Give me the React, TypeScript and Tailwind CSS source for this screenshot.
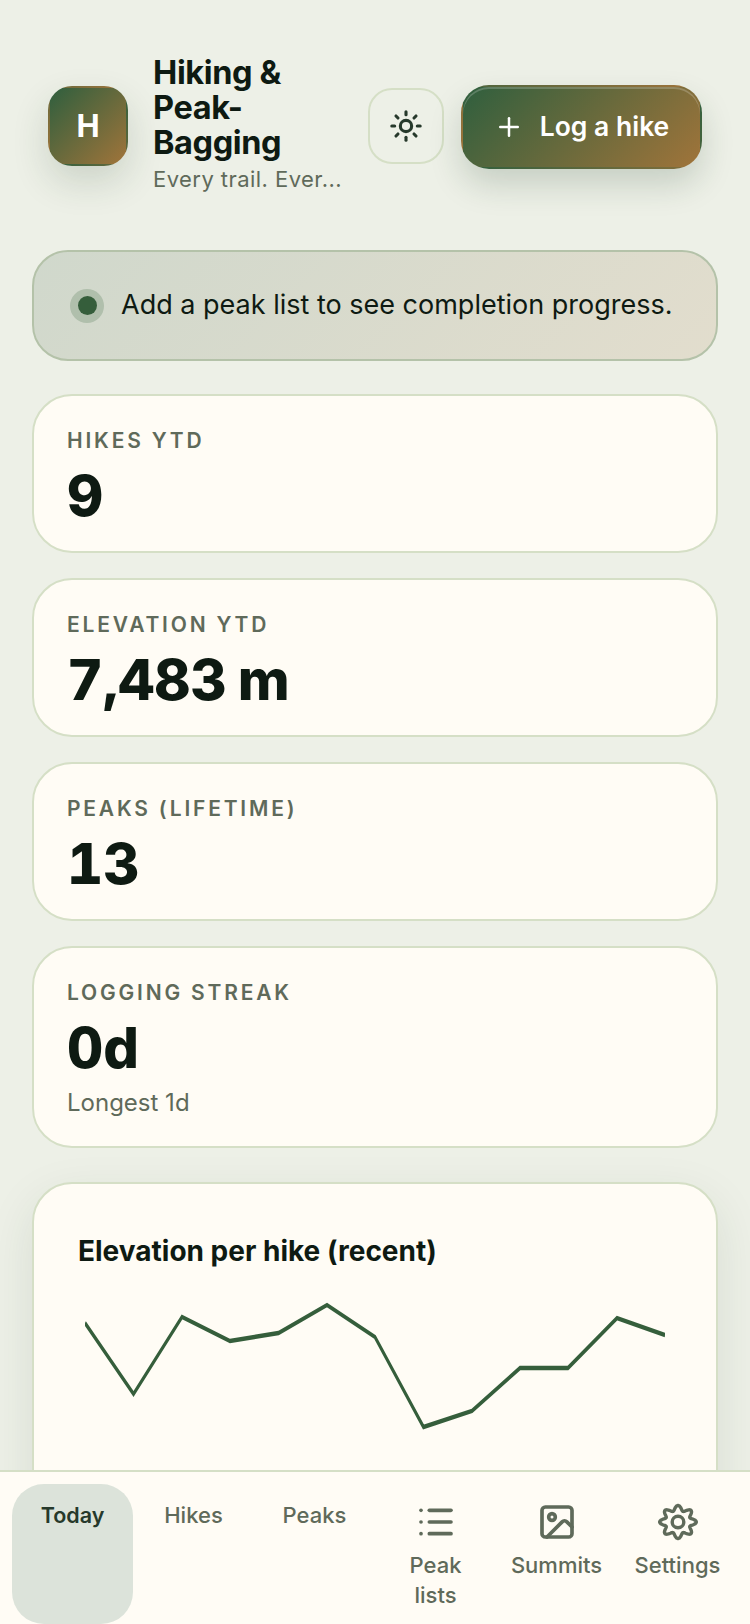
import React from "react";
import { Sun, Plus, List, Image } from "lucide-react";

const font = "[font-family:Inter,'Liberation_Sans',sans-serif]";

function Stat({ label, value, sub }: { label: string; value: string; sub?: string }) {
  return (
    <div className="rounded-[40px] border-2 border-[#d5dfc6] bg-[#fffcf5] pl-[33px] pr-[32px] pt-[29px] pb-[20px]">
      <div className="text-[21px] leading-[32px] font-semibold tracking-[2.8px] text-[#5f6a5a]">{label}</div>
      <div className="text-[56px] leading-[70px] font-extrabold tabular-nums [word-spacing:-4px] text-[#0e1a12] mt-[4px]">{value}</div>
      {sub && <div className="text-[24px] leading-[34px] text-[#5f6a5a] mt-[3px] mb-[6px]">{sub}</div>}
    </div>
  );
}

const pts = [
  [85, 1323], [133.5, 1394], [182, 1317], [230, 1341], [278.5, 1333], [327, 1305], [375, 1337],
  [423.5, 1427], [472, 1411], [520, 1368], [568, 1368], [617, 1318], [665, 1335],
];
const line = pts.map(([x, y]) => `${((x - 85) / 1.2).toFixed(2)},${((y - 1300) / 2).toFixed(2)}`).join(" ");

const gearPath = (() => {
  const out: string[] = [];
  for (let i = 0; i < 160; i++) {
    const t = (i / 160) * Math.PI * 2;
    const r = 14 + 2.5 * Math.cos(8 * t);
    const x = 22 + 1.11 * r * Math.sin(t);
    const y = 20 - r * Math.cos(t);
    out.push(`${x.toFixed(2)},${y.toFixed(2)}`);
  }
  return out.join(" ");
})();

function Gear() {
  return (
    <svg width="44" height="40" viewBox="0 0 44 40" fill="none" stroke="currentColor" strokeWidth="3.4" strokeLinejoin="round">
      <polygon points={gearPath} />
      <circle cx="22" cy="20" r="5.8" />
    </svg>
  );
}

function NavItem({ label, icon, active }: { label: string; icon?: React.ReactNode; active?: boolean }) {
  return (
    <div className={`flex-1 min-w-0 flex flex-col items-center rounded-[32px] px-[14px] pt-[16px] text-center text-[22px] leading-[30px] font-medium ${active ? "bg-[#dce3da] text-[#26392b] font-semibold" : "text-[#5f6a5a]"}`}>
      {icon && <div className="h-[44px] mb-[6px] flex items-center justify-center">{icon}</div>}
      <span className={active ? "text-[21.5px]" : ""}>{label}</span>
    </div>
  );
}

export default function App() {
  return (
    <div className={`h-[1624px] w-[750px] flex flex-col overflow-hidden bg-[#edf0e7] ${font}`}>
      <main className="flex-1 min-h-0 overflow-hidden px-[32px] pt-[55px]">
        <header className="flex items-center pl-[16px]">
          <div className="w-[80px] h-[80px] shrink-0 rounded-[24px] border-2 border-transparent bg-[linear-gradient(135deg,#2f5f3e,#a0743a)] flex items-center justify-center text-white text-[31px] font-bold shadow-[0_16px_36px_rgba(30,60,40,0.16)] mt-[3px]">H</div>
          <div className="w-[196px] shrink-0 ml-[25px]">
            <div className="text-[32.5px] leading-[35px] font-bold tracking-[-0.4px] text-[#0e1a12]">Hiking &amp; Peak-Bagging</div>
            <div className="text-[22px] leading-[30px] tracking-[0.45px] text-[#5f6a5a] mt-[4px] whitespace-nowrap">Every trail. Ever...</div>
          </div>
          <button className="ml-[19px] w-[76px] h-[76px] shrink-0 rounded-[24px] border-2 border-[#d5dfc6] flex items-center justify-center text-[#26392b] mt-[3px]">
            <Sun size={34} strokeWidth={2.2} />
          </button>
          <button className="ml-[17px] w-[241px] h-[84px] shrink-0 rounded-[28px] border-2 border-transparent bg-[linear-gradient(135deg,#2f5f3e,#a0743a)] flex items-center justify-center gap-[16px] text-white text-[26.5px] font-semibold shadow-[0_16px_32px_rgba(30,60,40,0.18),inset_0_2px_0_rgba(255,255,255,0.2)] mt-[5px]">
            <Plus size={30} strokeWidth={2} />
            <span>Log a hike</span>
          </button>
        </header>

        <div className="mt-[56px] h-[111px] rounded-[36px] border-2 border-[#b4c2a9] bg-[linear-gradient(135deg,#d0d8cc,#e2ddcd)] flex items-center pl-[36px]">
          <div className="w-[34px] h-[34px] shrink-0 rounded-full bg-[#b0bfac] flex items-center justify-center">
            <div className="w-[19px] h-[19px] rounded-full bg-[#355e3b]" />
          </div>
          <span className="ml-[17px] text-[27px] text-[#0e1a12] whitespace-nowrap">Add a peak list to see completion progress.</span>
        </div>

        <div className="mt-[33px] flex flex-col gap-[25px]">
          <Stat label="HIKES YTD" value="9" />
          <Stat label="ELEVATION YTD" value="7,483 m" />
          <Stat label="PEAKS (LIFETIME)" value="13" />
          <Stat label="LOGGING STREAK" value="0d" sub="Longest 1d" />
          <section className="mt-[9px] h-[400px] rounded-[40px] border-2 border-[#d5dfc6] bg-[#fffcf5] px-[44px] pt-[49px] shadow-[0_16px_48px_rgba(30,60,40,0.1)]">
            <h2 className="text-[28px] leading-[36px] font-bold text-[#0e1a12]">Elevation per hike (recent)</h2>
            <svg className="ml-[7px] mt-[31px] block" width="580" height="130" viewBox="0 0 483.33 65" preserveAspectRatio="none" fill="none">
              <polyline points={line} stroke="#355e3b" strokeWidth="2.2" />
            </svg>
          </section>
        </div>
      </main>

      <nav className="h-[154px] shrink-0 border-t-2 border-[#d5dfc6] bg-[#fffcf5] flex px-[12px] pt-[12px]">
        <NavItem label="Today" active />
        <NavItem label="Hikes" />
        <NavItem label="Peaks" />
        <NavItem label="Peak lists" icon={<List size={40} strokeWidth={2.2} />} />
        <NavItem label="Summits" icon={<Image size={40} strokeWidth={2.2} />} />
        <NavItem label="Settings" icon={<Gear />} />
      </nav>
    </div>
  );
}
